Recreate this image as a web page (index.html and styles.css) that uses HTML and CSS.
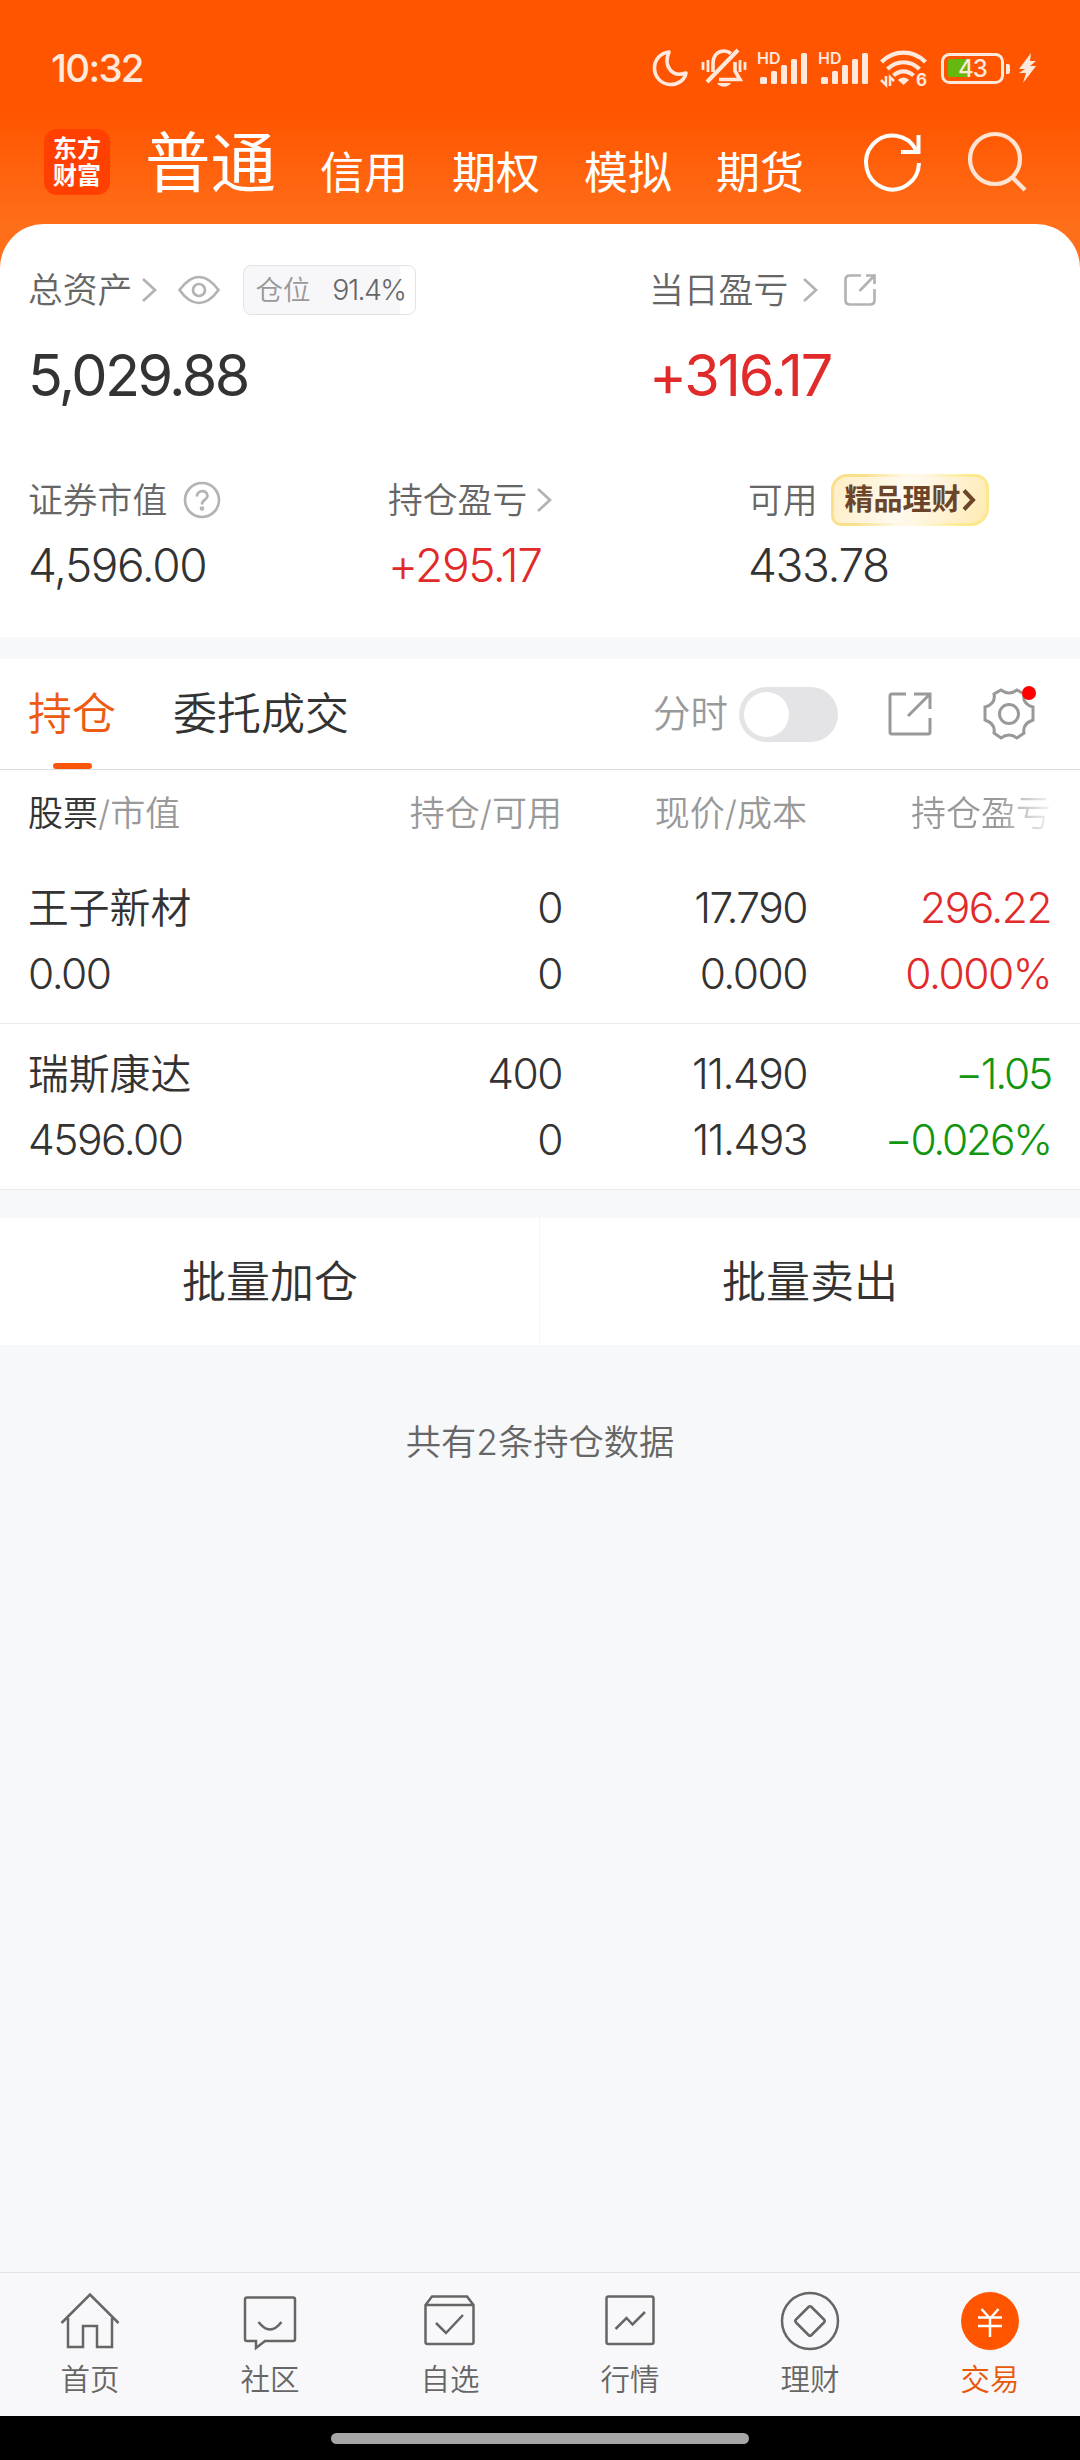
FILE: index.html
```html
<!DOCTYPE html>
<html lang="zh-CN">
	<head>
		<meta charset="utf-8">
		<title>交易</title>
		<link rel="stylesheet" href="styles.css">
	</head>
	<body>
		<div class="top">
			<div class="statusbar">
				<span class="time">10:32</span>
				<svg class="moon" width="36" height="38" viewBox="0 0 36 38" fill="none" stroke="#ffe8dc" stroke-width="3.6" stroke-linejoin="round"><path d="M17 3C9 4 2.500 10 2.500 19C2.500 28 9.500 35.500 18.500 35.500C26.500 35.500 33 30.500 34 24C20 29 11 17 17 3Z"/></svg>
				<svg class="bell" width="46" height="40" viewBox="0 0 46 40" fill="none" stroke="#ffe8dc" stroke-width="3.600">
					<path d="M12 24V16C12 7 17 3 23 3C25.500 3 28 4 30 5.500M34 14V23L39 31.500H18"/>
					<path d="M6 34L37 2" stroke-width="4"/>
					<path d="M2 14V22M7 12V24M39 12V24M44 14V22" stroke-width="2.800"/>
					<path d="M16 35H30C27 40 19 40 16 35Z" fill="#ffe8dc" stroke="none"/>
				</svg>
				<svg class="signal" width="50" height="36" viewBox="0 0 50 36" fill="#ffe8dc">
					<text x="0" y="14" class="hd">HD</text>
					<rect x="3" y="27" width="7" height="7" rx="1.500"/><rect x="14" y="21" width="6" height="13" rx="1.500"/><rect x="24" y="15" width="6" height="19" rx="1.500"/><rect x="34" y="9" width="6" height="25" rx="1.500"/><rect x="44" y="3" width="6" height="31" rx="1.500"/>
				</svg>
				<svg class="signal" width="50" height="36" viewBox="0 0 50 36" fill="#ffe8dc">
					<text x="0" y="14" class="hd">HD</text>
					<rect x="3" y="27" width="7" height="7" rx="1.500"/><rect x="14" y="21" width="6" height="13" rx="1.500"/><rect x="24" y="15" width="6" height="19" rx="1.500"/><rect x="34" y="9" width="6" height="25" rx="1.500"/><rect x="44" y="3" width="6" height="31" rx="1.500"/>
				</svg>
				<svg class="wifi" width="48" height="38" viewBox="0 0 48 38" fill="none" stroke="#ffe8dc" stroke-width="4.200">
					<path d="M1.500 13C14 0.500 33 0.500 45.500 13M7.500 20C17 11 30 11 39.500 20M13.500 26.500C19.500 21 27.500 21 33.500 26.500"/>
					<path d="M18 31C21 27.500 26 27.500 29 31L23.500 36Z" fill="#ffe8dc" stroke="none"/>
					<path d="M6 27V36L1 31M10 37V28L14 32" stroke-width="2.500"/>
					<text x="36" y="36.500" class="wifi-gen">6</text>
				</svg>
				<svg class="battery" width="70" height="32" viewBox="0 0 70 32">
					<rect x="1.500" y="2.500" width="60" height="28" rx="7" fill="none" stroke="#ffe8dc" stroke-width="3"/>
					<path d="M9 7H27V25H9Q7 25 7 23V9Q7 7 9 7Z" fill="#66b70e"/>
					<path d="M65 12H67Q69 12 69 14V20Q69 22 67 22H65Z" fill="#ffe8dc"/>
					<text x="31.500" y="24.500" class="charge">43</text>
				</svg>
				<svg class="bolt" width="19" height="32" viewBox="0 0 19 32" fill="#ffe8dc"><path d="M13 1L1 17H7L1 21L8 21L5 31L18 14H12L18 9H12Z"/></svg>
			</div>
			<div class="header">
				<div class="logo"><span>东方</span><span>财富</span></div>
				<nav class="accounts">
					<span class="current">普通</span>
					<span>信用</span>
					<span>期权</span>
					<span>模拟</span>
					<span>期货</span>
				</nav>
				<svg class="refresh" width="60" height="60" viewBox="0 0 60 60" fill="none" stroke="#fff" stroke-width="4"><path d="M56 31A26.500 27 0 1 1 53 18"/><path d="M55.500 3V20H38"/></svg>
				<svg class="search" width="62" height="62" viewBox="0 0 62 62" fill="none" stroke="#ffe4d3" stroke-width="4.200"><circle cx="28" cy="28" r="25"/><path d="M45 46L58 59"/></svg>
			</div>

			<section class="assets">
				<div class="summary">
					<div>
						<div class="label">
							总资产
							<svg class="chevron near" width="16" height="24" viewBox="0 0 16 24"><path d="M2 1L14 12L2 23"/></svg>
							<svg class="eye" width="42" height="30" viewBox="0 0 42 30"><path d="M1.500 15C8 6 14 2 21 2C28 2 34 6 40.500 15C34 24 28 28 21 28C14 28 8 24 1.500 15Z"/><circle cx="21" cy="15" r="6"/></svg>
							<span class="ratio"><span>仓位</span><b>91.4%</b></span>
						</div>
						<div class="amount">5,029.88</div>
					</div>
					<div>
						<div class="label">
							当日盈亏
							<svg class="chevron far" width="16" height="24" viewBox="0 0 16 24"><path d="M2 1L14 12L2 23"/></svg>
							<svg class="share-small" width="32" height="32" viewBox="0 0 32 32"><path d="M17 1.500H6Q1.500 1.500 1.500 6V26Q1.500 30.500 6 30.500H26Q30.500 30.500 30.500 26V15M15.500 17L29.500 2.500M22 1.500H30.500V10"/></svg>
						</div>
						<div class="amount up">+316.17</div>
					</div>
				</div>
				<div class="details">
					<div>
						<div class="label">
							证券市值
							<svg class="help" width="38" height="38" viewBox="0 0 38 38"><circle cx="19" cy="19" r="17"/><path d="M14 15.500C14 8.500 24.500 8.500 24.500 15C24.500 19 19 18.500 19 23.500"/><circle cx="19" cy="27.500" r="1" /></svg>
						</div>
						<div class="value">4,596.00</div>
					</div>
					<div>
						<div class="label">
							持仓盈亏
							<svg class="chevron near" width="16" height="24" viewBox="0 0 16 24"><path d="M2 1L14 12L2 23"/></svg>
						</div>
						<div class="value up">+295.17</div>
					</div>
					<div>
						<div class="label">
							可用
							<span class="wealth">精品理财<svg width="14" height="22" viewBox="0 0 14 22"><path d="M2 1.500L11 11L2 20.500"/></svg></span>
						</div>
						<div class="value">433.78</div>
					</div>
				</div>
			</section>
		</div>

		<section class="holdings">
			<div class="tabs">
				<span class="tab active">持仓</span>
				<span class="tab">委托成交</span>
				<span class="minute">分时</span>
				<span class="switch"></span>
				<svg class="share" width="44" height="44" viewBox="0 0 44 44"><path d="M18 2H4Q2 2 2 4V40Q2 42 4 42H40Q42 42 42 40V26M20 24L41 3M26 2H42V17"/></svg>
				<div class="settings">
					<svg width="54" height="54" viewBox="0 0 54 54"><path d="M19 3Q27 9 35 3L42 7Q40 17 51 20V33Q40 37 42 46L35 51Q27 45 19 51L12 46Q14 37 3 33V20Q14 17 12 7Z"/><circle cx="27" cy="27" r="9.500"/></svg>
				</div>
			</div>
			<div class="columns">
				<span><em>股票</em>/市值</span>
				<span>持仓/可用</span>
				<span>现价/成本</span>
				<span class="faded">持仓盈亏</span>
			</div>
			<div class="stock">
				<span class="name">王子新材</span><span>0</span><span>17.790</span><span class="up">296.22</span>
				<span>0.00</span><span>0</span><span>0.000</span><span class="up">0.000%</span>
			</div>
			<div class="stock">
				<span class="name">瑞斯康达</span><span>400</span><span>11.490</span><span class="down">−1.05</span>
				<span>4596.00</span><span>0</span><span>11.493</span><span class="down">−0.026%</span>
			</div>
		</section>

		<div class="batch">
			<div>批量加仓</div>
			<div>批量卖出</div>
		</div>
		<p class="total">共有2条持仓数据</p>

		<nav class="bottom">
			<div>
				<svg width="60" height="60" viewBox="0 0 60 60"><path d="M1.500 32L30 3.500L58.500 32M8 27V56H23V35H37V56H52V27"/></svg>
				首页
			</div>
			<div>
				<svg width="60" height="60" viewBox="0 0 60 60"><path d="M7 6.500H53Q55 6.500 55 8.500V48Q55 50 53 50H25L16 57V50H7Q5 50 5 48V8.500Q5 6.500 7 6.500ZM18.500 31Q30 46 41.500 31"/></svg>
				社区
			</div>
			<div>
				<svg width="60" height="60" viewBox="0 0 60 60"><path d="M5.500 14L12 5.500H47L53.500 14V51Q53.500 53 51.500 53H7.500Q5.500 53 5.500 51ZM6 14H53M16 32L26 42L43 24"/></svg>
				自选
			</div>
			<div>
				<svg width="60" height="60" viewBox="0 0 60 60"><rect x="6.500" y="5.500" width="47" height="47.500" rx="2"/><path d="M15.500 38L26.500 27L32.500 33.500L45 21"/></svg>
				行情
			</div>
			<div>
				<svg width="60" height="60" viewBox="0 0 60 60"><circle cx="30" cy="30" r="28"/><path d="M28.500 16Q30 14.500 31.500 16L44 28.500Q45.500 30 44 31.500L31.500 44Q30 45.500 28.500 44L16 31.500Q14.500 30 16 28.500Z"/></svg>
				理财
			</div>
			<div class="on">
				<svg width="60" height="60" viewBox="0 0 60 60"><circle cx="30" cy="30" r="29"/><path d="M21.500 18L30 27.500L38.500 18M18 26.500H42M18 35H42M30 27V46"/></svg>
				交易
			</div>
		</nav>
		<div class="gesture"><i></i></div>
	</body>
</html>
```

FILE: styles.css
```css
body {
	margin: 0;
	width: 1080px;
	height: 2460px;
	display: flex;
	flex-direction: column;
	background: #f7f8fa;
	color: #333;
	font-family: Inter, "Noto Sans CJK SC", sans-serif;
	font-weight: 350;
	white-space: nowrap;
	overflow: hidden;
}

svg {
	flex: none;
	overflow: visible;
}

.top {
	background: linear-gradient(#ff5500 115px, #ff6e19 224px);
}

/* status bar */
.statusbar {
	height: 136px;
	padding: 0 43px 0 51px;
	box-sizing: border-box;
	display: flex;
	align-items: center;
}

.time {
	color: #ffe8dc;
	font-size: 38.500px;
	font-weight: 500;
	letter-spacing: -1.700px;
	margin-right: auto;
}

.bell { margin-left: 13px; }
.signal { margin-left: 11px; }
.bell + .signal { margin-left: 10px; }
.wifi { margin-left: 12px; }
.battery { margin-left: 13px; }
.bolt { margin-left: 7px; }

.hd {
	font-size: 16px;
	font-weight: 600;
}

.wifi-gen {
	font-size: 17px;
	font-weight: 700;
	fill: #ffe8dc;
	stroke: none;
}

.charge {
	font-size: 24px;
	font-weight: 500;
	letter-spacing: -1px;
	fill: #ffe8dc;
	text-anchor: middle;
}

/* header */
.header {
	height: 88px;
	padding: 0 51px 36px 44px;
	box-sizing: border-box;
	display: flex;
	align-items: center;
	color: #fff;
}

.logo {
	width: 66px;
	height: 66px;
	border-radius: 13px;
	background: #ff4000;
	display: flex;
	flex-direction: column;
	align-items: center;
	justify-content: center;
	font-size: 24px;
	font-weight: 700;
	line-height: 27px;
}

.accounts {
	margin-left: 35px;
	display: flex;
	align-items: center;
	gap: 44px;
	font-size: 44px;
	font-weight: 400;
	line-height: 66px;
}

.accounts span {
	padding-top: 22px;
}

.accounts .current {
	padding-top: 3px;
	font-size: 65.500px;
}

.refresh {
	margin-left: auto;
}

.search {
	margin-left: 44px;
}

/* assets panel */
.assets {
	height: 413px;
	padding: 41px 0 0 28px;
	box-sizing: border-box;
	background: #fff;
	border-radius: 44px 44px 0 0;
}

.summary {
	display: grid;
	grid-template-columns: 621px 1fr;
}

.details {
	margin-top: 69px;
	display: grid;
	grid-template-columns: 360px 360px 1fr;
}

.label {
	height: 50px;
	display: flex;
	align-items: center;
	font-size: 34.800px;
	line-height: 50px;
	color: #666;
}

.details .label {
	height: 52px;
}

.label svg {
	fill: none;
	stroke: #b3b3b3;
	stroke-width: 2.700;
}

.near { margin-left: 9px; }
.far { margin-left: 14px; }
.eye { margin-left: 21px; }
.share-small { margin-left: 26px; }
.help { margin-left: 16px; }

.ratio {
	width: 173px;
	height: 50px;
	margin-left: 23px;
	padding: 0 10px 0 11px;
	box-sizing: border-box;
	display: flex;
	align-items: center;
	justify-content: space-between;
	border: 1px solid #e3e3e6;
	border-radius: 8px;
	background: linear-gradient(90deg, #f7f7fa 91.400%, #fff 91.400%);
	font-size: 27.500px;
	color: #999;
}

.ratio b {
	font-size: 28.500px;
	font-weight: 350;
	letter-spacing: -1.600px;
	color: #666;
}

.amount {
	height: 60px;
	margin-top: 30px;
	line-height: 60px;
	font-size: 57.500px;
	font-weight: 400;
	letter-spacing: -2.600px;
}

.amount.up {
	letter-spacing: -2.200px;
}

.value {
	height: 50px;
	margin-top: 14px;
	line-height: 50px;
	font-size: 46px;
	letter-spacing: -1.400px;
}

.up {
	color: #e12a2a;
}

.down {
	color: #12960f;
}

.wealth {
	width: 158px;
	height: 52px;
	margin-left: 13px;
	padding-left: 11px;
	box-sizing: border-box;
	display: flex;
	align-items: center;
	border: 3px solid #fae08c;
	border-radius: 16px 14px 18px 10px;
	background: linear-gradient(110deg, #ffedc4, #fffaf0 45%, #fff7e6 55%, #ffeab4) padding-box, linear-gradient(100deg, #fae08c 20%, #fff8e4 45%, #fff8e4 55%, #fbe98c 85%) border-box;
	border-color: transparent;
	color: #6b4429;
	font-size: 29px;
	font-weight: 700;
	line-height: 46px;
}

.label .wealth svg {
	margin-left: 1px;
	stroke: #6b4429;
	stroke-width: 4;
}

/* holdings */
.holdings {
	margin-top: 22px;
	background: #fff;
}

.tabs {
	height: 110px;
	padding: 0 44px 0 28px;
	display: flex;
	align-items: center;
	border-bottom: 1px solid #dcdcdc;
}

.tab {
	position: relative;
	margin-right: 57px;
	font-size: 44px;
	line-height: 110px;
}

.active {
	color: #ee5a12;
}

.active::after {
	content: "";
	position: absolute;
	left: 25px;
	bottom: 0;
	width: 39px;
	height: 6px;
	border-radius: 3px;
	background: #f9560b;
}

.minute {
	margin-left: auto;
	font-size: 37.500px;
	line-height: 110px;
	color: #999;
}

.switch {
	width: 99px;
	height: 55px;
	margin-left: 11px;
	padding: 5px;
	box-sizing: border-box;
	border-radius: 28px;
	background: #e4e4e6;
}

.switch::before {
	content: "";
	display: block;
	width: 45px;
	height: 45px;
	border-radius: 50%;
	background: #fff;
}

.tabs svg {
	fill: none;
	stroke: #999;
	stroke-width: 3;
}

.share {
	margin-left: 50px;
}

.settings {
	position: relative;
	height: 54px;
	margin-left: 50px;
}

.settings::after {
	content: "";
	position: absolute;
	top: -1px;
	right: 0;
	width: 14px;
	height: 14px;
	border-radius: 50%;
	background: #f00;
}

.columns,
.stock {
	padding: 0 29px 0 28px;
	display: grid;
	grid-template-columns: 284px 250px 245px 244px;
	text-align: right;
}

.columns {
	height: 88px;
	line-height: 87px;
	font-size: 35px;
	color: #999;
}

.columns em {
	color: #333;
	font-style: normal;
}

.columns span:first-child,
.stock span:nth-child(4n+1) {
	text-align: left;
}

.faded {
	background: linear-gradient(90deg, #999 190px, #fff 250px);
	background-clip: text;
	-webkit-background-clip: text;
	color: transparent;
}

.stock {
	padding: 17px 30px 16px 28px;
	border-bottom: 1px solid #ebebeb;
	line-height: 66px;
	font-size: 42.500px;
	letter-spacing: -1.500px;
}

.stock .name {
	font-size: 40.800px;
	letter-spacing: 0;
}

.stock .down {
	letter-spacing: -2.200px;
}

/* actions */
.batch {
	margin-top: 28px;
	height: 127px;
	display: grid;
	grid-template-columns: 1fr 1fr;
	background: #fff;
	line-height: 128px;
	font-size: 44px;
	text-align: center;
}

.batch div + div {
	box-shadow: -1px 0 #f5f5f7;
}

.total {
	margin: 72px 0 0;
	line-height: 51px;
	font-size: 35.300px;
	color: #666;
	text-align: center;
}

/* bottom navigation */
.bottom {
	height: 144px;
	margin-top: auto;
	box-sizing: border-box;
	display: grid;
	grid-template-columns: repeat(6, 1fr);
	border-top: 1px solid #e2e2e4;
	background: #f8f8fa;
	font-size: 29.500px;
	color: #666;
}

.bottom div {
	padding-top: 18px;
	display: flex;
	flex-direction: column;
	align-items: center;
	line-height: 56px;
}

.bottom svg {
	fill: none;
	stroke: #666;
	stroke-width: 2.500;
}

.bottom .on {
	color: #e8590c;
}

.bottom .on circle {
	fill: #ff5500;
	stroke: none;
}

.bottom .on path {
	stroke: #fff;
}

.gesture {
	height: 44px;
	display: flex;
	align-items: center;
	justify-content: center;
	background: #000;
}

.gesture i {
	width: 418px;
	height: 11px;
	border-radius: 6px;
	background: #a6a6a6;
}
```
